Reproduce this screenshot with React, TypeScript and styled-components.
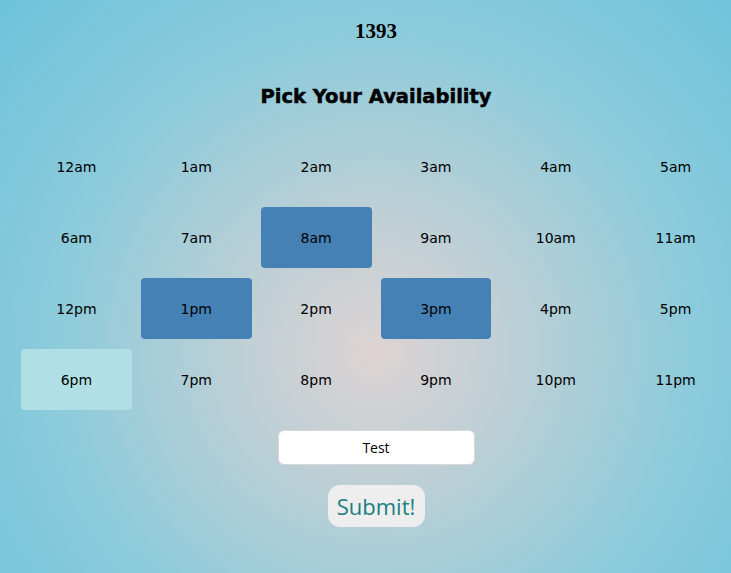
import styled, { createGlobalStyle } from "styled-components";

const GlobalStyle = createGlobalStyle`
  html, body {
    margin: 0;
    padding: 0;
  }
  body {
    background: #6ec4dc;
  }
`

const Page = styled.main`
  min-height: 573px;
  box-sizing: border-box;
  padding: 19px 0 40px 21px;
  display: flex;
  flex-direction: column;
  align-items: center;
  background: radial-gradient(circle farthest-corner at 375px 350px, #ded3d3 0%, #b9cfd6 30%, #8ccbdb 62%, #6cc3db 100%);
`

const Number = styled.div`
  font-family: "Liberation Serif", serif;
  font-weight: bold;
  font-size: 21px;
  line-height: 24px;
  color: #000;
`

const Heading = styled.h2`
  font-family: "DejaVu Sans", sans-serif;
  font-weight: bold;
  font-size: 19.5px;
  line-height: 28px;
  margin: 40px 0 25px;
  color: #000;
  -webkit-text-stroke: 0.5px #000;
`

const Grid = styled.div`
  width: 100%;
  display: grid;
  grid-template-columns: repeat(6, 1fr);
  grid-auto-rows: 61px;
  column-gap: 9px;
  row-gap: 10px;
`

const Slot = styled.div<{ $state: "none" | "picked" | "hover" }>`
  display: flex;
  align-items: center;
  justify-content: center;
  border-radius: 4px;
  font-family: "DejaVu Sans", Verdana, sans-serif;
  font-size: 14px;
  color: #000;
  background: ${p => p.$state === "picked" ? "#4581b5" : p.$state === "hover" ? "#b0e0e6" : "transparent"};
`

const NameInput = styled.input`
  margin-top: 20px;
  width: 197px;
  height: 35px;
  box-sizing: border-box;
  border: 1px solid #d8d8d8;
  border-radius: 6px;
  background: #fff;
  text-align: center;
  font-family: "Open Sans", sans-serif;
  font-size: 14px;
  color: #000;
  outline: none;
`

const SubmitButton = styled.button`
  margin-top: 20px;
  width: 97px;
  height: 42px;
  border: none;
  border-radius: 12px;
  background: #eeeeee;
  color: #1a8080;
  font-family: "Open Sans", sans-serif;
  font-size: 22px;
  padding: 0;
  cursor: pointer;
`

const hours = [
  "12am", "1am", "2am", "3am", "4am", "5am",
  "6am", "7am", "8am", "9am", "10am", "11am",
  "12pm", "1pm", "2pm", "3pm", "4pm", "5pm",
  "6pm", "7pm", "8pm", "9pm", "10pm", "11pm",
]

const picked = ["8am", "1pm", "3pm"]

const App = () => {
  return (
    <>
      <GlobalStyle />
      <Page>
        <Number>1393</Number>
        <Heading>Pick Your Availability</Heading>
        <Grid>
          {hours.map(h => (
            <Slot key={h} $state={picked.includes(h) ? "picked" : h === "6pm" ? "hover" : "none"}>{h}</Slot>
          ))}
        </Grid>
        <NameInput defaultValue="Test" />
        <SubmitButton>Submit!</SubmitButton>
      </Page>
    </>
  )
}

export default App
